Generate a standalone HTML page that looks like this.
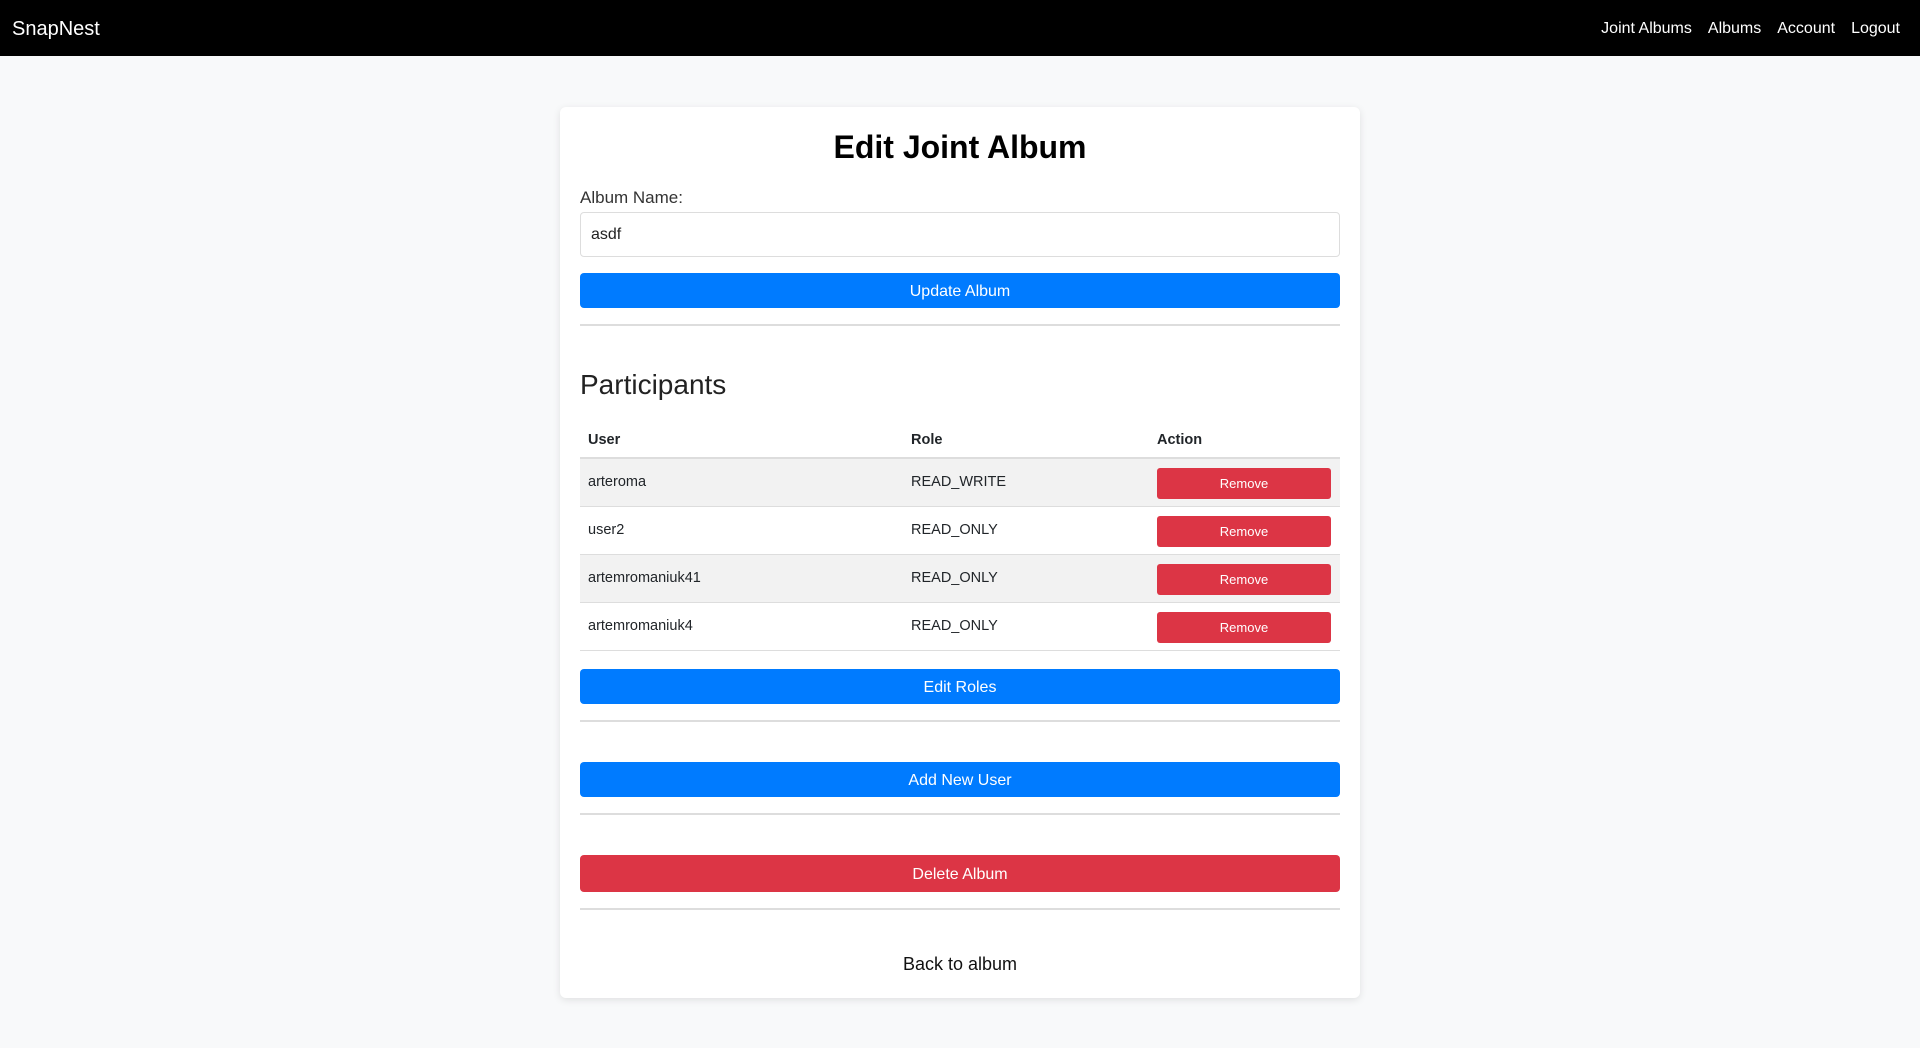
<!DOCTYPE html>
<html><head><meta charset="utf-8"><style>
*{box-sizing:border-box;margin:0;padding:0}
body{width:1920px;height:1048px;background:#f8f9fa;font-family:"Liberation Sans",sans-serif;color:#212529;overflow:hidden;position:relative}
.nav{position:absolute;left:0;top:0;width:1920px;height:56px;background:#000;color:#fff}
.brand{position:absolute;left:12px;top:18px;font-size:20px}
.links{position:absolute;right:20px;top:20px;font-size:16px;display:flex;gap:16px}
.card{position:absolute;left:560px;top:107px;width:800px;height:891px;background:#fff;border-radius:6px;box-shadow:0 2px 8px rgba(0,0,0,.1)}
.a{position:absolute;left:20px;width:760px}
h1{position:absolute;left:0;width:800px;top:22px;text-align:center;font-size:32px;font-weight:bold;color:#000}
.lbl{top:81px;font-size:17px;color:#333}
.inp{top:105px;height:45px;border:1px solid #ddd;border-radius:4px;padding:13px 10px;font-size:16px;color:#222}
.btn{height:35px;border-radius:4px;color:#fff;font-size:16px;text-align:center;line-height:37px;background:#007bff}
.red{background:#dc3545}
.hr{height:0;border-top:2px solid #ddd}
h2{top:262px;font-size:28px;font-weight:normal;color:#222}
.row{height:48px;border-bottom:1px solid #ddd;font-size:14.5px}
.row span{position:absolute;top:15px}
.rb{position:absolute;left:577px;top:9px;width:174px;height:31px;line-height:32px;background:#dc3545;color:#fff;border-radius:3px;text-align:center;font-size:13px}
.c1{left:8px}.c2{left:331px}
</style></head><body>
<div class="nav"><div class="brand">SnapNest</div><div class="links"><span>Joint Albums</span><span>Albums</span><span>Account</span><span>Logout</span></div></div>
<div class="card">
<h1>Edit Joint Album</h1>
<div class="a lbl">Album Name:</div>
<div class="a inp">asdf</div>
<div class="a btn" style="top:166px">Update Album</div>
<div class="a hr" style="top:217px"></div>
<h2 class="a">Participants</h2>
<div class="a row" style="top:304px;height:48px;border-bottom:2px solid #ddd;font-weight:bold"><span class="c1" style="top:21px">User</span><span class="c2" style="top:21px">Role</span><span style="left:577px;top:21px">Action</span></div>
<div class="a row" style="top:352px;background:#f2f2f2"><span class="c1">arteroma</span><span class="c2">READ_WRITE</span><div class="rb">Remove</div></div>
<div class="a row" style="top:400px"><span class="c1">user2</span><span class="c2">READ_ONLY</span><div class="rb">Remove</div></div>
<div class="a row" style="top:448px;background:#f2f2f2"><span class="c1">artemromaniuk41</span><span class="c2">READ_ONLY</span><div class="rb">Remove</div></div>
<div class="a row" style="top:496px"><span class="c1">artemromaniuk4</span><span class="c2">READ_ONLY</span><div class="rb">Remove</div></div>
<div class="a btn" style="top:562px">Edit Roles</div>
<div class="a hr" style="top:613px"></div>
<div class="a btn" style="top:655px">Add New User</div>
<div class="a hr" style="top:706px"></div>
<div class="a btn red" style="top:748px;height:37px;line-height:39px">Delete Album</div>
<div class="a hr" style="top:801px"></div>
<div class="a" style="top:847px;text-align:center;font-size:18px;color:#111">Back to album</div>
</div>
</body></html>
